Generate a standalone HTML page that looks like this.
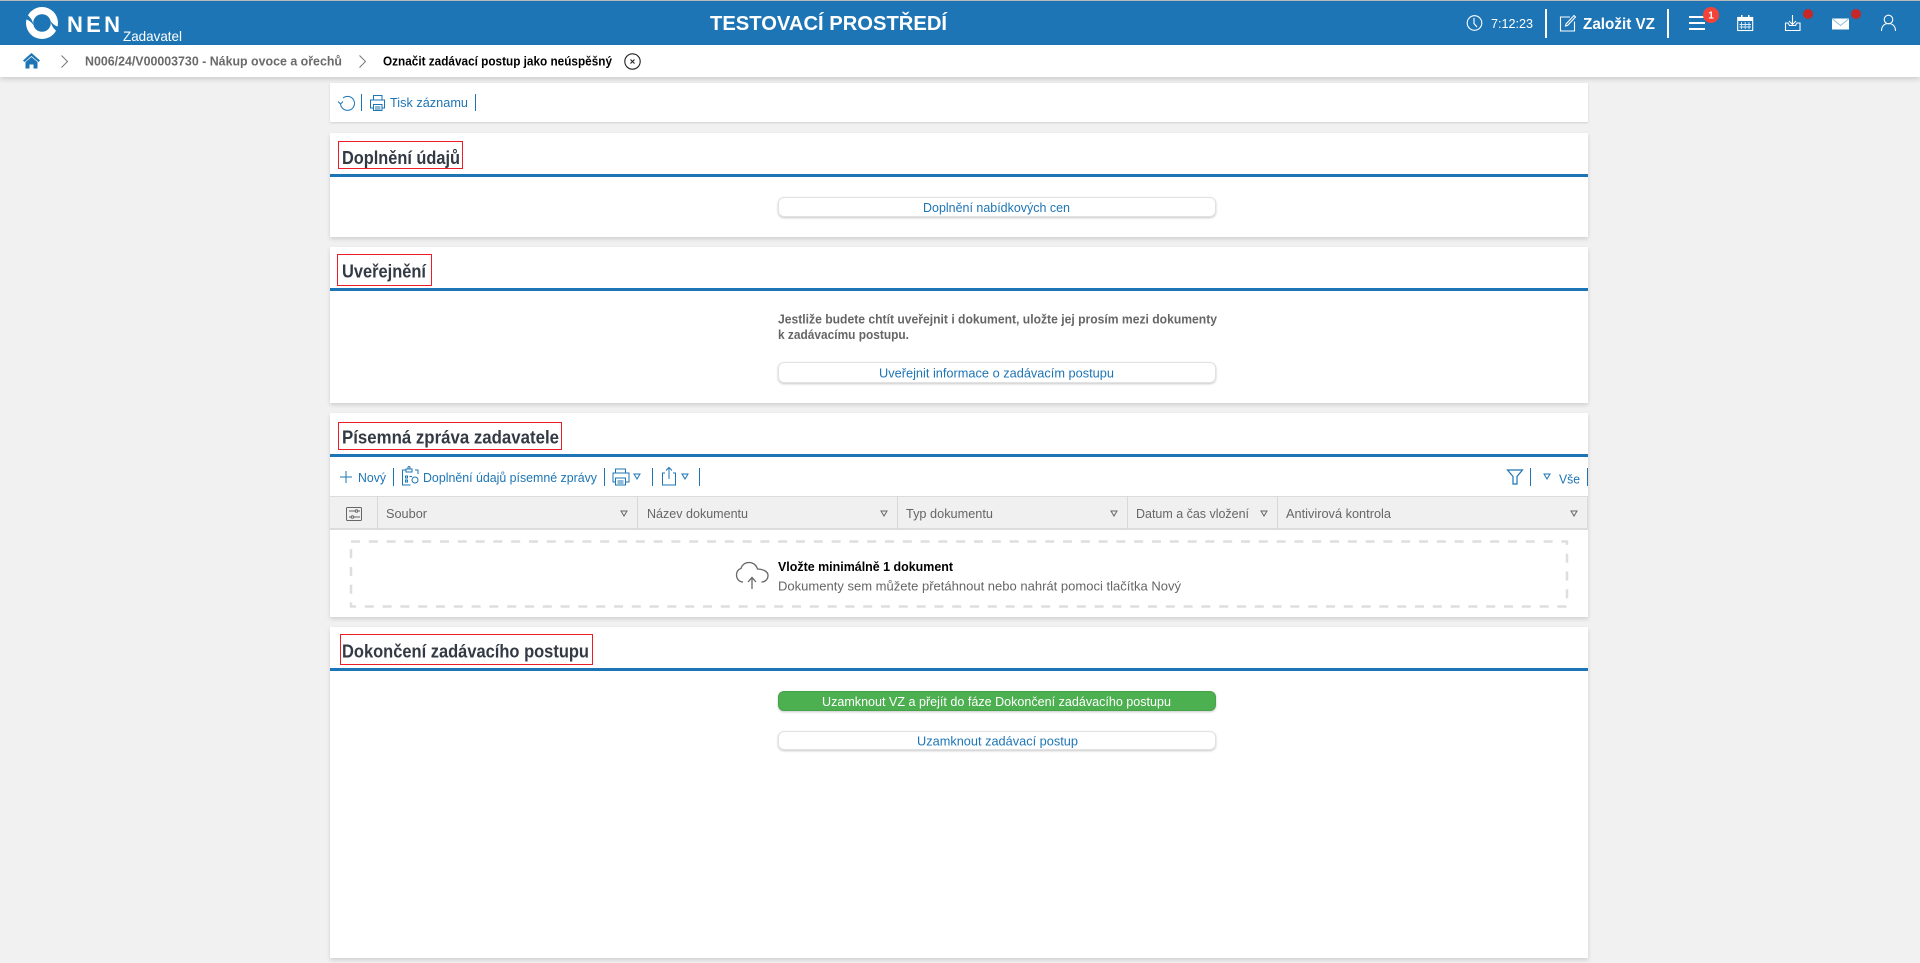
<!DOCTYPE html>
<html lang="cs"><head><meta charset="utf-8"><title>NEN Zadavatel</title>
<style>
html,body{margin:0;padding:0;width:1920px;height:963px;overflow:hidden;background:#f1f1f1;font-family:"Liberation Sans",sans-serif}
.top{position:absolute;left:0;top:1px;width:1920px;height:44px;background:#1d75b5}
.strip{position:absolute;left:0;top:0;width:1920px;height:1px;background:#b9b9b9}
.crumb{position:absolute;left:0;top:45px;width:1920px;height:32px;background:#fff;box-shadow:0 2px 5px rgba(0,0,0,.16)}
.panel{position:absolute;left:330px;width:1258px;background:#fff;box-shadow:0 2px 4px rgba(0,0,0,.14)}
.line{position:absolute;left:330px;width:1258px;height:3px;background:#1d75b5}
.red{position:absolute;border:1px solid #ee1c25;box-sizing:border-box}
.btn{position:absolute;left:778px;width:438px;box-sizing:border-box;background:#fff;border:1px solid #e2e2e2;border-radius:6px;box-shadow:0 1px 2px rgba(0,0,0,.22)}
.green{background:#4caf50;border-color:#46a34a}
.thead{position:absolute;left:330px;top:496px;width:1258px;height:34px;box-sizing:border-box;background:#f0f0f0;border:solid #dcdcdc;border-width:1px 1px 2px 0}
.col{position:absolute;top:496px;width:1px;height:33px;background:#d8d8d8}
svg.o{position:absolute;left:0;top:0}
svg.o text{font-family:"Liberation Sans",sans-serif}
</style></head><body>
<div class="strip"></div><div class="top"></div><div class="crumb"></div>
<div class="panel" style="top:83px;height:39px;box-shadow:0 1px 2px rgba(0,0,0,.14)"></div>
<div class="panel" style="top:133px;height:104px"></div><div class="line" style="top:174px"></div>
<div class="panel" style="top:247px;height:156px"></div><div class="line" style="top:288px"></div>
<div class="panel" style="top:413px;height:204px"></div><div class="line" style="top:454px"></div>
<div class="panel" style="top:627px;height:331px"></div><div class="line" style="top:668px"></div>
<div class="red" style="left:338px;top:141px;width:125px;height:28px"></div>
<div class="red" style="left:337px;top:254px;width:95px;height:32px"></div>
<div class="red" style="left:338px;top:422px;width:224px;height:28px"></div>
<div class="red" style="left:340px;top:634px;width:253px;height:31px"></div>
<div class="btn" style="top:197px;height:20px"></div>
<div class="btn" style="top:362px;height:21px"></div>
<div class="btn green" style="top:691px;height:20px"></div>
<div class="btn" style="top:731px;height:19px"></div>
<div class="thead"></div>
<div class="col" style="left:377px"></div><div class="col" style="left:637px"></div><div class="col" style="left:897px"></div><div class="col" style="left:1127px"></div><div class="col" style="left:1277px"></div>

<svg class="o" width="1920" height="963" viewBox="0 0 1920 963">
<!-- logo -->
<circle cx="42" cy="23" r="16" fill="#fff"/>
<circle cx="42" cy="23" r="8.800" fill="#1d75b5"/>
<path fill="#1d75b5" d="M33.500 25C32.500 20 29.500 15.500 24.500 13L23.500 19C27.500 19 31 21.500 33.500 25z"/>
<path fill="#1d75b5" transform="rotate(180 42 23)" d="M33.500 25C32.500 20 29.500 15.500 24.500 13L23.500 19C27.500 19 31 21.500 33.500 25z"/>
<text x="67" y="32" font-size="22" font-weight="700" fill="#fff" textLength="53" lengthAdjust="spacing">NEN</text>
<text x="123" y="41" font-size="14" fill="#fff" textLength="59" lengthAdjust="spacingAndGlyphs">Zadavatel</text>
<text x="710" y="30" font-size="20" font-weight="700" fill="#fff" textLength="237" lengthAdjust="spacingAndGlyphs">TESTOVACÍ PROSTŘEDÍ</text>
<!-- right header -->
<g fill="none" stroke="#fff" stroke-width="1.100">
<circle cx="1474.500" cy="23" r="7.300"/><path d="M1474 18v5.500l3 3.500"/>
<path d="M1570 17h-9.500v14h14v-9.500"/><path d="M1566 24l8-8.500 1.500 1.500-8 8.500-2 .5z"/>
<path d="M1881.500 31c0-5 3-7.500 7-7.500s7 2.500 7 7.500"/><circle cx="1888.500" cy="19.500" r="4.300"/>
<path d="M1792.500 15v9M1789 21l3.500 3.500 3.500-3.500"/>
<path d="M1788 23h-2.500v7.500h14.500V23H1797l-1.500 2.500h-6z"/>
<rect x="1737.700" y="17.500" width="15" height="13"/>
<path d="M1741.500 22v7M1745.200 22v7M1749 22v7M1739.500 24.500h11.500M1739.500 27h11.500" stroke-width=".9" opacity=".85"/>
</g>
<rect x="1545" y="9" width="2" height="29" fill="#fff"/><rect x="1667" y="9" width="2" height="29" fill="#fff"/>
<text x="1491" y="28" font-size="13" fill="#fff" textLength="42" lengthAdjust="spacingAndGlyphs">7:12:23</text>
<text x="1583" y="29" font-size="16" font-weight="700" fill="#fff" textLength="72" lengthAdjust="spacingAndGlyphs">Založit VZ</text>
<g fill="#fff"><rect x="1689" y="16" width="16" height="2"/><rect x="1689" y="22" width="16" height="2"/><rect x="1689" y="28" width="16" height="2"/>
<rect x="1737.500" y="17" width="15.500" height="4"/><rect x="1741" y="15" width="1.500" height="3"/><rect x="1748" y="15" width="1.500" height="3"/>
<path d="M1832 18.500h17v11h-17z"/></g>
<path d="M1832.500 19l8 6.500 8-6.500" fill="none" stroke="#8fbcdc" stroke-width="1"/>
<circle cx="1711" cy="15" r="8" fill="#f44336"/><text x="1708.300" y="18.700" font-size="10" font-weight="700" fill="#fff">1</text>
<circle cx="1808" cy="14" r="5" fill="#c62828"/><circle cx="1856" cy="14" r="5" fill="#c62828"/>
<!-- breadcrumb -->
<path d="M31.500 53L23 60.500l1.500 1.500 7-6 7 6 1.500-1.500z" fill="#1d75b5"/>
<path d="M25.500 62l6-5 6 5v6.500h-4v-4h-4v4h-4z" fill="#1d75b5"/>
<path d="M61.500 55.500l6 6-6 6M359.500 55.500l6 6-6 6" fill="none" stroke="#777" stroke-width="1"/>
<text x="85" y="65.500" font-size="13" font-weight="700" fill="#6a6a6a" textLength="257" lengthAdjust="spacingAndGlyphs">N006/24/V00003730 - Nákup ovoce a ořechů</text>
<text x="383" y="65.500" font-size="13" font-weight="700" fill="#000" textLength="229" lengthAdjust="spacingAndGlyphs">Označit zadávací postup jako neúspěšný</text>
<circle cx="632.500" cy="61.500" r="7.700" fill="none" stroke="#222" stroke-width="1.100"/><path d="M630.500 59.500l4 4M634.500 59.500l-4 4" stroke="#222" stroke-width="1.100"/>
<!-- toolbar -->
<g fill="none" stroke="#1d75b5" stroke-width="1">
<path d="M343 98a7 7 0 1 1-2.500 5.500M338 101.500l2.500 2.500 2.500-2.500"/>
<path d="M373.500 100v-4.500h8.500v4.500M373 108h-2.500v-8h14v8H382M373.500 104.500h8.500v6h-8.500zM375 107h5.500M375 109h5.500"/>
<path d="M615.500 473v-4h10v4M615.500 482h-2.500v-9h16v9h-3M615.500 478h10v7h-10zM617.500 481h6M617.500 483h6"/>
<path d="M665 473h-2.500v12h13v-12H673M669 479v-11M666 470.500l3-3 3 3"/>
<path d="M340 477h12M346 471v12"/>
<path d="M406 470h-3.500v15h8M415 470h3v4M406 469h6v3h-6zM408 469v-1.500a1 1 0 0 1 2 0V469"/><circle cx="415" cy="480" r="3"/><path d="M405.500 476h2v2h-2zM405.500 480h2v2h-2zM409.500 476.500h2.500"/>
<path d="M1507.500 470h15l-5.500 6.500v7.500h-4v-7.500z" stroke-width="1.200"/>
</g>
<g fill="#1d75b5"><rect x="361" y="94" width="1" height="17"/><rect x="475" y="94" width="1" height="17"/>
<rect x="393" y="468" width="1" height="18"/><rect x="604" y="468" width="1" height="18"/><rect x="652" y="468" width="1" height="18"/><rect x="699" y="468" width="1" height="18"/><rect x="1530" y="468" width="1" height="18"/><rect x="1587" y="468" width="1" height="18"/></g>
<text x="390" y="107" font-size="13" fill="#1d75b5" textLength="78" lengthAdjust="spacingAndGlyphs">Tisk záznamu</text>
<!-- headings -->
<g font-size="18" font-weight="700" fill="#333a44">
<text x="342" y="164" textLength="118" lengthAdjust="spacingAndGlyphs">Doplnění údajů</text>
<text x="342" y="277.500" textLength="84" lengthAdjust="spacingAndGlyphs">Uveřejnění</text>
<text x="342" y="443.500" textLength="217" lengthAdjust="spacingAndGlyphs">Písemná zpráva zadavatele</text>
<text x="342" y="657.500" textLength="247" lengthAdjust="spacingAndGlyphs">Dokončení zadávacího postupu</text>
</g>
<!-- buttons -->
<g font-size="13" fill="#1d75b5">
<text x="923" y="212" textLength="147" lengthAdjust="spacingAndGlyphs">Doplnění nabídkových cen</text>
<text x="879" y="377.500" textLength="235" lengthAdjust="spacingAndGlyphs">Uveřejnit informace o zadávacím postupu</text>
<text x="917" y="745.500" textLength="161" lengthAdjust="spacingAndGlyphs">Uzamknout zadávací postup</text>
<text x="358" y="482" textLength="28" lengthAdjust="spacingAndGlyphs">Nový</text>
<text x="423" y="482" textLength="174" lengthAdjust="spacingAndGlyphs">Doplnění údajů písemné zprávy</text>
<text x="1559" y="483.500" textLength="21" lengthAdjust="spacingAndGlyphs">Vše</text>
</g>
<text x="822" y="706" font-size="13" fill="#fff" textLength="349" lengthAdjust="spacingAndGlyphs">Uzamknout VZ a přejít do fáze Dokončení zadávacího postupu</text>
<g font-size="13" font-weight="700" fill="#666">
<text x="778" y="323.500" textLength="439" lengthAdjust="spacingAndGlyphs">Jestliže budete chtít uveřejnit i dokument, uložte jej prosím mezi dokumenty</text>
<text x="778" y="339" textLength="131" lengthAdjust="spacingAndGlyphs">k zadávacímu postupu.</text>
</g>
<!-- table -->
<g font-size="13" fill="#666">
<text x="386" y="518" textLength="41" lengthAdjust="spacingAndGlyphs">Soubor</text>
<text x="647" y="518" textLength="101" lengthAdjust="spacingAndGlyphs">Název dokumentu</text>
<text x="906" y="518" textLength="87" lengthAdjust="spacingAndGlyphs">Typ dokumentu</text>
<text x="1136" y="518" textLength="113" lengthAdjust="spacingAndGlyphs">Datum a čas vložení</text>
<text x="1286" y="518" textLength="105" lengthAdjust="spacingAndGlyphs">Antivirová kontrola</text>
<text x="778" y="590.500" textLength="403" lengthAdjust="spacingAndGlyphs">Dokumenty sem můžete přetáhnout nebo nahrát pomoci tlačítka Nový</text>
</g>
<text x="778" y="571" font-size="13" font-weight="700" fill="#000" textLength="175" lengthAdjust="spacingAndGlyphs">Vložte minimálně 1 dokument</text>
<g fill="none" stroke="#666" stroke-width="1">
<path d="M621 511h6l-3 5zM881 511h6l-3 5zM1111 511h6l-3 5zM1261 511h6l-3 5zM1571 511h6l-3 5z"/>
<rect x="346.500" y="507.500" width="15" height="13" rx="1"/><path d="M349 511h6M358 511h2M349 517h2M354 517h6"/><circle cx="356.500" cy="511" r="1.300"/><circle cx="352.500" cy="517" r="1.300"/>
<path d="M743 582c-4 0-6.500-3.500-6.500-7s2-6 4.500-6.500c1-4 4.500-6 8-6 4.500 0 7.500 3 8.500 6.500 5 .2 10.500 2 10.500 6.500 0 4-3 6.500-6.500 6.500M752 589v-11M748 582l4-4.500 4 4.500" stroke-width="1.300"/>
</g>
<g fill="none" stroke="#1d75b5" stroke-width="1"><path d="M634 474h6l-3 5zM682 474h6l-3 5zM1544 474h6l-3 5z"/></g>
<rect x="351" y="541.500" width="1216" height="65" fill="none" stroke="#dedede" stroke-width="2.500" stroke-dasharray="9 8.800"/>
</svg>
</body></html>
